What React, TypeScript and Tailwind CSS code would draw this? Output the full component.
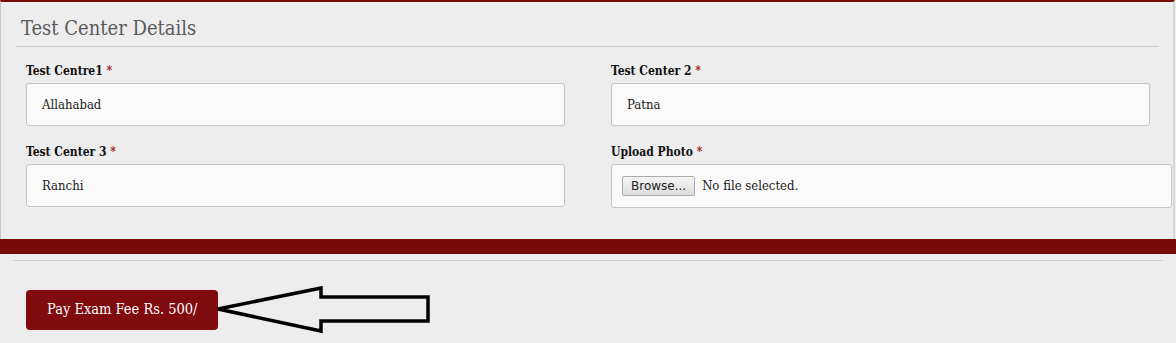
export default function App() {
  const serif = "font-['DejaVu_Serif_Condensed','DejaVu_Serif',serif] [font-stretch:condensed]";
  return (
    <div className={`w-[1176px] h-[343px] overflow-hidden bg-[#ededed] ${serif}`}>
      <div className="h-[239px] border-t-2 border-t-[#7a0a0a] border-l border-l-[#c8c8c8] border-r-2 border-r-[#d8d8d8] mr-[1px]">
        <div className="px-[15px] pr-[14px]">
          <h3 className="pl-[5px] pt-[13px] h-[45px] border-b border-[#c9c9c9] text-[20px] font-light text-[#5a5a5a] leading-[26px]">
            Test Center Details
          </h3>
        </div>
        <div className="grid grid-cols-[539px_561px] gap-x-[46px] pl-[25px] pt-[17px]">
          <Field label="Test Centre1" value="Allahabad" />
          <Field label="Test Center 2" value="Patna" />
          <Field label="Test Center 3" value="Ranchi" />
          <div>
            <Label text="Upload Photo" />
            <div className="mt-[5px] h-[44px] w-[561px] rounded-[3px] border border-[#c4c4c4] bg-[#fafafa] flex items-center pl-[10px] gap-[7px]">
              <span className="h-[20px] px-[8px] flex items-center border border-[#aaa] rounded-[2px] bg-gradient-to-b from-[#f4f4f4] to-[#dedede] text-[12px] text-[#222] font-['DejaVu_Sans',sans-serif] [font-stretch:normal]">
                Browse...
              </span>
              <span className="text-[13px] text-[#222]">No file selected.</span>
            </div>
          </div>
        </div>
      </div>
      <div className="h-[15px] bg-[#7a0a0a]" />
      <div className="h-[89px] border-b-2 border-[#7a0a0a]">
        <div className="mx-[13px] mt-[6px] border-t border-[#cfcfcf]" />
        <div className="flex items-center pl-[26px] pt-[25px]">
          <button className="h-[40px] w-[192px] rounded-[4px] bg-[#800a0e] text-white text-[14.5px] text-left pl-[21px]">
            Pay Exam Fee Rs. 500/
          </button>
          <svg width="216" height="48" viewBox="0 0 216 48" className="-ml-[2px]">
            <polygon
              points="2,23 105,2 105,11 212,11 212,35 105,35 105,45"
              fill="none"
              stroke="#000"
              strokeWidth="3.5"
              strokeLinejoin="miter"
            />
          </svg>
        </div>
      </div>
    </div>
  );
}

function Label({ text }: { text: string }) {
  return (
    <div className="h-[14px] text-[12px] font-bold text-[#111] leading-[14px]">
      {text} <span className="text-[#a01a1a]">*</span>
    </div>
  );
}

function Field({ label, value }: { label: string; value: string }) {
  return (
    <div className="mb-[19px]">
      <Label text={label} />
      <div className="mt-[5px] h-[43px] w-[539px] rounded-[3px] border border-[#c4c4c4] bg-[#fafafa] flex items-center pl-[15px] text-[13px] text-[#222]">
        {value}
      </div>
    </div>
  );
}
